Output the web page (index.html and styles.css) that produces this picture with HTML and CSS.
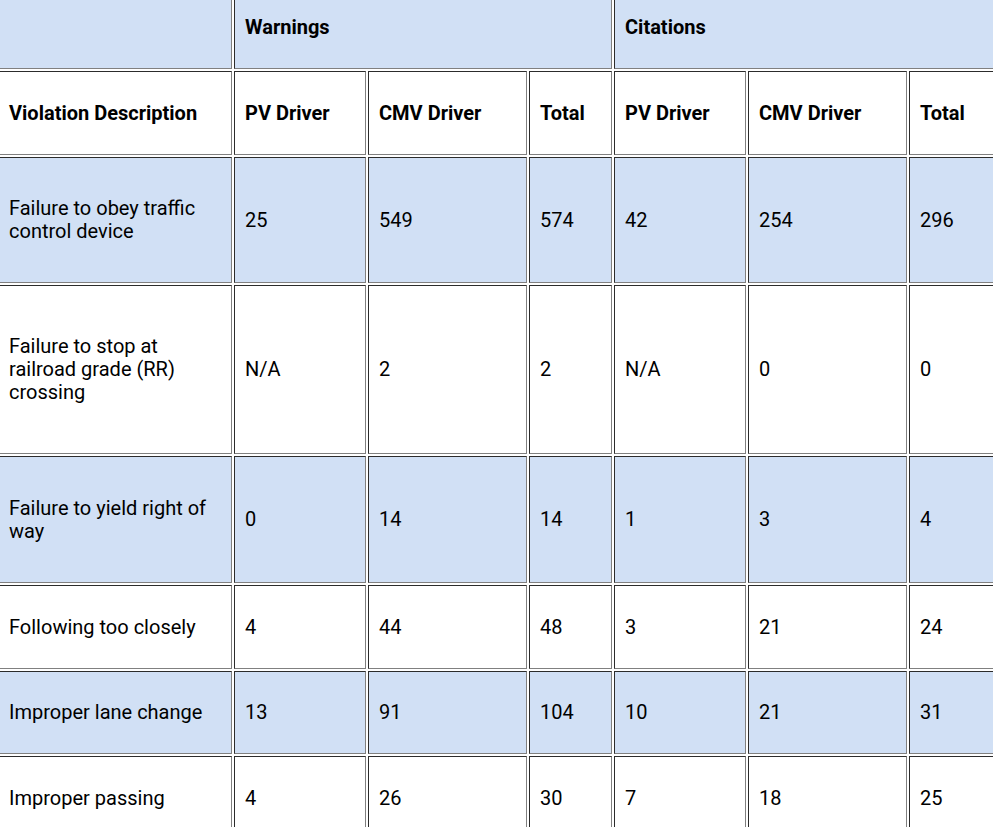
FILE: index.html
```html
<!DOCTYPE html>
<html>
<head>
<meta charset="utf-8">
<link rel="stylesheet" href="styles.css">
</head>
<body>
<table class="grid">
  <colgroup>
    <col class="c-desc"><col class="c-pv"><col class="c-cmv"><col class="c-tot"><col class="c-pv"><col class="c-cmv"><col class="c-last">
  </colgroup>
  <tr class="blue r1">
    <th></th>
    <th colspan="3">Warnings</th>
    <th colspan="3">Citations</th>
  </tr>
  <tr class="r2">
    <th>Violation Description</th>
    <th>PV Driver</th><th>CMV Driver</th><th>Total</th>
    <th>PV Driver</th><th>CMV Driver</th><th>Total</th>
  </tr>
  <tr class="blue r3">
    <td>Failure to obey traffic control device</td>
    <td>25</td><td>549</td><td>574</td><td>42</td><td>254</td><td>296</td>
  </tr>
  <tr class="r4">
    <td>Failure to stop at railroad grade (RR) crossing</td>
    <td>N/A</td><td>2</td><td>2</td><td>N/A</td><td>0</td><td>0</td>
  </tr>
  <tr class="blue r5">
    <td>Failure to yield right of way</td>
    <td>0</td><td>14</td><td>14</td><td>1</td><td>3</td><td>4</td>
  </tr>
  <tr class="r6">
    <td>Following too closely</td>
    <td>4</td><td>44</td><td>48</td><td>3</td><td>21</td><td>24</td>
  </tr>
  <tr class="blue r7">
    <td>Improper lane change</td>
    <td>13</td><td>91</td><td>104</td><td>10</td><td>21</td><td>31</td>
  </tr>
  <tr class="r8">
    <td>Improper passing</td>
    <td>4</td><td>26</td><td>30</td><td>7</td><td>18</td><td>25</td>
  </tr>
</table>
</body>
</html>
```
FILE: styles.css
```css
html, body {
  margin: 0;
  padding: 0;
  background: #ffffff;
  overflow: hidden;
}
body {
  font-family: Roboto, "Liberation Sans", sans-serif;
  font-size: 20px;
  color: #000;
}
.grid {
  table-layout: fixed;
  width: 1020px;
  border-collapse: separate;
  border-spacing: 2px;
  border: 1px outset grey;
  margin: -18px 0 0 -5px;
  background: #fff;
}
.c-desc { width: 234px; }
.c-pv { width: 132px; }
.c-cmv { width: 159px; }
.c-tot { width: 83px; }
.c-last { width: 103px; }
.grid th, .grid td {
  border: 1px inset grey;
  padding: 0 10px;
  text-align: left;
  vertical-align: middle;
  line-height: 23px;
  box-sizing: border-box;
}
.grid th { font-weight: bold; }
.blue th, .blue td { background: #d1e0f5; }
.r1 th { height: 84px; }
.r2 th { height: 84px; }
.r3 td { height: 126px; }
.r4 td { height: 169px; }
.r5 td { height: 127px; }
.r6 td { height: 84px; }
.r7 td { height: 83px; }
.r8 td { height: 84px; }
```
